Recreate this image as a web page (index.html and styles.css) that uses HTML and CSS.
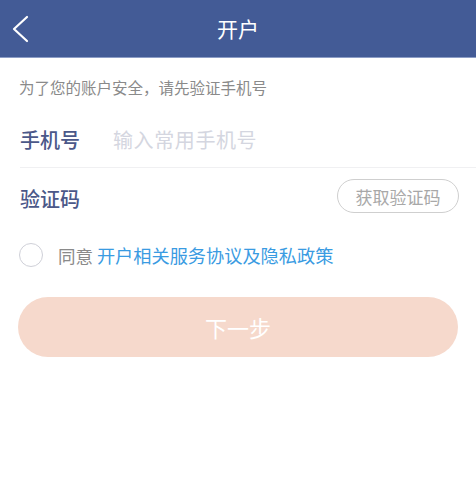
FILE: index.html
```html
<!DOCTYPE html>
<html lang="zh-CN">
<head>
<meta charset="utf-8">
<title>开户</title>
<link rel="stylesheet" href="styles.css">
</head>
<body>
<header class="topbar">
  <div class="back">
    <svg width="20" height="30" viewBox="0 0 20 30"><polyline points="15,2 2,14 15,26" fill="none" stroke="#ffffff" stroke-width="2.2" stroke-linecap="round" stroke-linejoin="round"/></svg>
  </div>
  <h1 class="title">开户</h1>
  <div></div>
</header>
<p class="tip">为了您的账户安全，请先验证手机号</p>
<div class="form">
  <div class="row row-phone">
    <span class="label">手机号</span>
    <span class="placeholder">输入常用手机号</span>
  </div>
  <div class="row row-code">
    <span class="label">验证码</span>
    <span class="code-btn">获取验证码</span>
  </div>
  <div class="agree">
    <span class="check"></span>
    <span class="agree-text">同意 <span class="link">开户相关服务协议及隐私政策</span></span>
  </div>
</div>
<div class="next">下一步</div>
</body>
</html>
```

FILE: styles.css
```css
html, body {
  margin: 0;
  padding: 0;
  background: #ffffff;
  font-family: "Noto Sans CJK SC", "Noto Sans", sans-serif;
}
.topbar {
  height: 57px;
  background: #435b96;
  border-bottom: 1px solid #8c9dc6;
  display: grid;
  grid-template-columns: 1fr auto 1fr;
  align-items: center;
}
.back {
  padding-left: 12px;
  padding-top: 2px;
  display: flex;
  align-items: center;
}
.title {
  margin: 0;
  font-size: 21px;
  font-weight: normal;
  color: #ffffff;
  line-height: 1;
}
.tip {
  margin: 0;
  padding: 19px 0 0 19px;
  font-size: 15.5px;
  line-height: 20px;
  height: 20px;
  color: #8a8a8a;
}
.form {
  padding-left: 20px;
}
.row {
  display: flex;
  align-items: center;
}
.row-phone {
  margin-top: 14px;
  height: 56px;
  border-bottom: 1px solid #f0f0f2;
}
.row-code {
  height: 60px;
  justify-content: space-between;
  padding-right: 17px;
}
.label {
  font-size: 20px;
  font-weight: 500;
  color: #4b5889;
  width: 93px;
  flex: none;
}
.placeholder {
  font-size: 20px;
  letter-spacing: 0.6px;
  color: #d4d6e0;
}
.code-btn {
  box-sizing: border-box;
  width: 122px;
  height: 34px;
  border: 1.5px solid #cfcfcf;
  border-radius: 17px;
  display: flex;
  align-items: center;
  justify-content: center;
  font-size: 17px;
  color: #a8a8a8;
  margin-top: -4px;
}
.agree {
  margin-top: 15px;
  height: 24px;
  display: flex;
  align-items: center;
  margin-left: -1px;
}
.check {
  box-sizing: border-box;
  width: 24px;
  height: 24px;
  border: 1.5px solid #cfd0d8;
  border-radius: 50%;
  flex: none;
  margin-right: 15px;
}
.agree-text {
  font-size: 17.5px;
  color: #8a8a8a;
  white-space: nowrap;
}
.link {
  font-size: 18.2px;
  color: #3a9be2;
}
.next {
  margin: 30px 18px 0 18px;
  height: 60px;
  border-radius: 30px;
  background: #f6d9cc;
  color: #ffffff;
  font-size: 22px;
  display: flex;
  align-items: center;
  justify-content: center;
}
```
